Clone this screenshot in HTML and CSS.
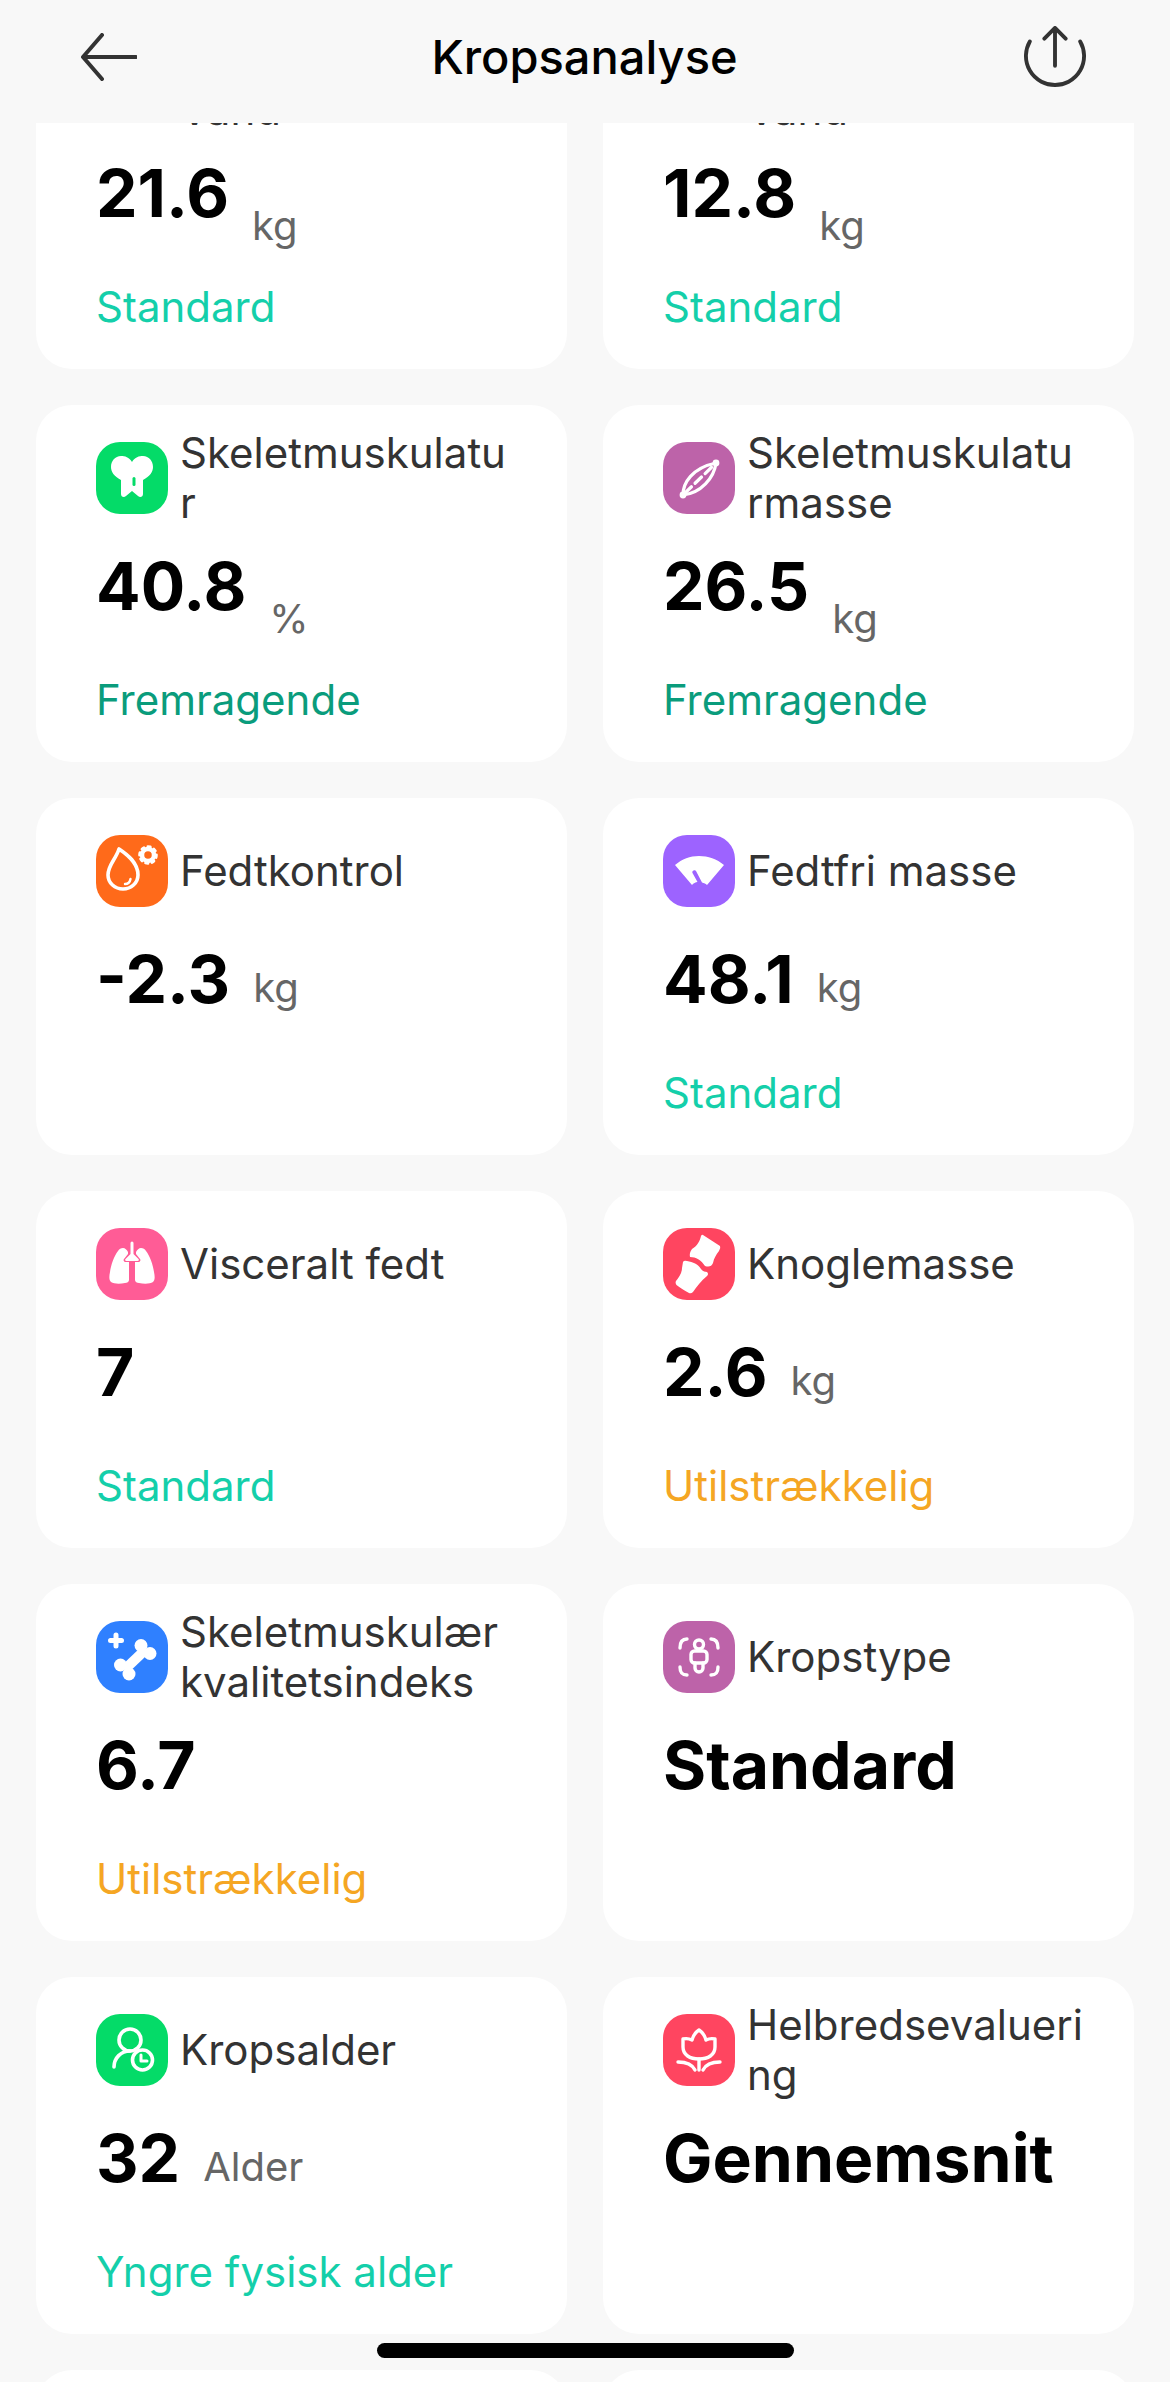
FILE: index.html
```html
<!DOCTYPE html>
<html lang="da">
<head>
  <meta charset="UTF-8" />
  <meta name="viewport" content="width=device-width, initial-scale=1.0"/>
  <title>Kropsanalyse</title>
  <link rel="stylesheet" href="styles.css">
</head>
<body>
  <header class="topbar">
    <svg class="top-icon back" viewBox="0 0 56 48" fill="none"><path d="M55 24H3M21 2L2 24l19 22" stroke="#333" stroke-width="4" stroke-linecap="round" stroke-linejoin="round"/></svg>
    <h1>Kropsanalyse</h1>
    <svg class="top-icon share" viewBox="0 0 64 64" fill="none"><path d="M6 16A30 30 0 1 0 58 16M32 3v38M21 13L32 2l11 11" stroke="#333" stroke-width="4" stroke-linecap="round" stroke-linejoin="round"/></svg>
  </header>

  <main class="content">
    <div class="grid">
      <div class="card">
        <div class="card-head">
          <span class="tile blue"></span>
          <span class="name second-line">Vand</span>
        </div>
        <div class="value-row"><span class="value">21.6</span><span class="unit low">kg</span></div>
        <div class="status ok">Standard</div>
      </div>
      <div class="card">
        <div class="card-head">
          <span class="tile blue"></span>
          <span class="name second-line">Vand</span>
        </div>
        <div class="value-row"><span class="value">12.8</span><span class="unit low">kg</span></div>
        <div class="status ok">Standard</div>
      </div>

      <div class="card">
        <div class="card-head">
          <svg class="tile green" viewBox="0 0 72 72"><path d="M36 20c-3-5-7-6-11-6-6 0-10 5-10 11 0 5 3 9 10 13v14c0 3 3 4 5 2l6-5 6 5c2 2 5 1 5-2V38c7-4 10-8 10-13 0-6-4-11-10-11-4 0-8 1-11 6z" fill="#fff"/><rect x="36.500" y="35" width="3" height="9" rx="1.500" fill="#04db68"/></svg>
          <span class="name">Skeletmuskulatu<br>r</span>
        </div>
        <div class="value-row"><span class="value">40.8</span><span class="unit low">%</span></div>
        <div class="status great">Fremragende</div>
      </div>
      <div class="card">
        <div class="card-head">
          <svg class="tile orchid" viewBox="0 0 72 72" fill="none" stroke="#fff" stroke-width="3.200" stroke-linecap="round"><path d="M20 53c0-12 9-27 33-32-2 15-15 30-33 32z"/><path d="M22 51l31-30" stroke-dasharray="9 5"/><circle cx="53" cy="21" r="1.800" fill="#fff"/><circle cx="20" cy="53" r="1.800" fill="#fff"/></svg>
          <span class="name">Skeletmuskulatu<br>rmasse</span>
        </div>
        <div class="value-row"><span class="value">26.5</span><span class="unit low">kg</span></div>
        <div class="status great">Fremragende</div>
      </div>

      <div class="card">
        <div class="card-head">
          <svg class="tile orange" viewBox="0 0 72 72" fill="none" stroke="#fff" stroke-linecap="round" stroke-linejoin="round"><path d="M23 14c-3 10-11 16-11 26 0 8 7 14 15 14s15-6 15-14c0-12-10-20-19-26z" stroke-width="3.600"/><path d="M29 49c3 0 5-2 5.500-5" stroke-width="2.400"/><circle cx="52" cy="20" r="6" stroke-width="4.500"/><circle cx="52" cy="20" r="8.500" stroke-width="2.600" stroke-dasharray="2.600 4"/></svg>
          <span class="name">Fedtkontrol</span>
        </div>
        <div class="value-row"><span class="value">-2.3</span><span class="unit">kg</span></div>
      </div>
      <div class="card">
        <div class="card-head">
          <svg class="tile violet" viewBox="0 0 72 72"><path d="M12 30C19 24 27 21 36 21s18 3 25 9L44 50c-1-1-3-2-5-2.500L33 36c-.5-1-1.500-1-2.500-.5s-1.500 1.500-1 2.500l5 9c-2 .3-4 1.300-5.500 3z" fill="#fff"/></svg>
          <span class="name">Fedtfri masse</span>
        </div>
        <div class="value-row"><span class="value">48.1</span><span class="unit">kg</span></div>
        <div class="status ok">Standard</div>
      </div>

      <div class="card">
        <div class="card-head">
          <svg class="tile pink" viewBox="0 0 72 72"><path d="M34.500 15a1.500 1.500 0 0 1 3 0v11l5 5c1 1 0 2-1 2h-11c-1 0-2-1-1-2l5-5z" fill="#fff"/><path d="M27 20c2 0 4 2 5 4v2l-4 5c-1 1 0 3 1 3h4v18c0 2-2 3-4 3-5 1-11 1-14-1-2-2-2-5-1-10 1-7 4-16 8-21 1-2 3-3 5-3zM45 20c-2 0-4 2-5 4v2l4 5c1 1 0 3-1 3h-4v18c0 2 2 3 4 3 5 1 11 1 14-1 2-2 2-5 1-10-1-7-4-16-8-21-1-2-3-3-5-3z" fill="#fff"/></svg>
          <span class="name">Visceralt fedt</span>
        </div>
        <div class="value-row"><span class="value">7</span></div>
        <div class="status ok">Standard</div>
      </div>
      <div class="card">
        <div class="card-head">
          <svg class="tile red" viewBox="0 0 72 72" fill="#fff"><path d="M40 7L57 18Q58 20 56 23C53 27 51 30 50 35Q48 40 42 38C38 32 33 29 27 29Q26 25 29 21C34 18 37 13 38 8Q39 6 40 7z"/><path d="M20 34Q21 32 24 33C30 34 35 36 38 41Q40 44 44 44Q46 46 44 48C38 53 34 58 30 64Q28 66 26 65C21 62 17 60 13.500 57Q12 55 13 53C16 49 19 45 19 40z"/></svg>
          <span class="name">Knoglemasse</span>
        </div>
        <div class="value-row"><span class="value">2.6</span><span class="unit">kg</span></div>
        <div class="status warn">Utilstrækkelig</div>
      </div>

      <div class="card">
        <div class="card-head">
          <svg class="tile blue" viewBox="0 0 72 72" fill="#fff"><path d="M20 14v11M14.500 19.500h11" stroke="#fff" stroke-width="5" stroke-linecap="round"/><path d="M29 48l20-19" stroke="#fff" stroke-width="10"/><circle cx="45" cy="24.500" r="6.500"/><circle cx="54" cy="32.500" r="6.500"/><circle cx="24.500" cy="44" r="6.500"/><circle cx="33" cy="53" r="6.500"/></svg>
          <span class="name">Skeletmuskulær<br>kvalitetsindeks</span>
        </div>
        <div class="value-row"><span class="value">6.7</span></div>
        <div class="status warn">Utilstrækkelig</div>
      </div>
      <div class="card">
        <div class="card-head">
          <svg class="tile orchid" viewBox="0 0 72 72" fill="none" stroke="#fff" stroke-width="3.400" stroke-linecap="round"><path d="M17 27c0-6 2-9 7-9M55 27c0-6-2-9-7-9M17 46c0 6 2 8 7 8M55 46c0 6-2 8-7 8"/><circle cx="36" cy="23.500" r="4.500"/><rect x="28" y="30" width="16" height="12" rx="3.500"/><path d="M32 42v5a4 4 0 0 0 8 0v-5"/></svg>
          <span class="name">Kropstype</span>
        </div>
        <div class="value-row"><span class="value">Standard</span></div>
      </div>

      <div class="card">
        <div class="card-head">
          <svg class="tile green" viewBox="0 0 72 72" fill="none" stroke="#fff" stroke-width="3.600" stroke-linecap="round" stroke-linejoin="round"><circle cx="34" cy="26" r="11"/><path d="M18 53c0-9 7-16 16-16"/><circle cx="46.500" cy="46" r="10"/><path d="M45 41v6h6" stroke-width="3"/></svg>
          <span class="name">Kropsalder</span>
        </div>
        <div class="value-row"><span class="value">32</span><span class="unit">Alder</span></div>
        <div class="status ok">Yngre fysisk alder</div>
      </div>
      <div class="card">
        <div class="card-head">
          <svg class="tile red" viewBox="0 0 72 72" fill="none" stroke="#fff" stroke-width="3.400" stroke-linecap="round" stroke-linejoin="round"><path d="M20 25c4-1 7 0 9 1 1-4 4-8 7-10 3 2 6 6 7 10 2-1 5-2 9-1v8c0 8-7 12-16 12s-16-4-16-12z"/><path d="M36 45v11M15 48c8 0 14 2 17 8M57 48c-8 0-14 2-17 8"/></svg>
          <span class="name">Helbredsevalueri<br>ng</span>
        </div>
        <div class="value-row"><span class="value">Gennemsnit</span></div>
      </div>

      <div class="card"></div>
      <div class="card"></div>
    </div>
  </main>

  <div class="home-bar"></div>
</body>
</html>
```

FILE: styles.css
```css
html, body {
  margin: 0;
  height: 2382px;
  overflow: hidden;
}

body {
  position: relative;
  background: #f8f8f8;
  font-family: Inter, 'Noto Sans', sans-serif;
  color: #333;
}

.topbar {
  height: 123px;
  display: flex;
  align-items: center;
  justify-content: space-between;
  padding: 0 84px 10px 81px;
  box-sizing: border-box;
  background: #f8f8f8;
}

.topbar h1 {
  margin: 0 0 0 8px;
  font-size: 47px;
  font-weight: 500;
  color: #000;
}

.top-icon.back {
  width: 56px;
  height: 48px;
}

.top-icon.share {
  width: 62px;
  height: 62px;
}

.content {
  height: 2259px;
  overflow: hidden;
}

.grid {
  display: grid;
  grid-template-columns: 531px 531px;
  grid-auto-rows: 357px;
  gap: 36px;
  margin-top: -111px;
  padding: 0 36px;
}

.card {
  background: #fff;
  border-radius: 36px;
  padding: 23px 30px 0 60px;
}

.card-head {
  height: 100px;
  display: flex;
  align-items: center;
  gap: 12px;
}

.tile {
  flex: none;
  display: block;
  width: 72px;
  height: 72px;
  border-radius: 24px;
}

.green { background: #04db68; }
.orchid { background: #bd63a9; }
.orange { background: #ff6a1a; }
.violet { background: #9d63ff; }
.pink { background: #ff5c96; }
.red { background: #ff4560; }
.blue { background: #2f80ff; }

.name {
  font-size: 42px;
  line-height: 50px;
  color: #333;
}

/* only the lower line of these titles shows below the top bar */
.name.second-line {
  margin-top: 49px;
}

.value-row {
  display: flex;
  align-items: flex-end;
  gap: 23px;
  height: 90px;
  margin-top: 13px;
}

.value {
  font-size: 66px;
  line-height: 90px;
  font-weight: 700;
  color: #000;
}

.unit {
  font-size: 40px;
  line-height: 50px;
  color: #666;
  margin-bottom: 11px;
}

.unit.low {
  margin-bottom: -13px;
}

.status {
  margin-top: 44px;
  font-size: 42px;
  line-height: 50px;
}

.ok { color: #14cfaa; }
.great { color: #0a9c7c; }
.warn { color: #f5a623; }

.home-bar {
  position: absolute;
  left: 377px;
  top: 2343px;
  width: 417px;
  height: 15px;
  border-radius: 8px;
  background: #000;
}
```
